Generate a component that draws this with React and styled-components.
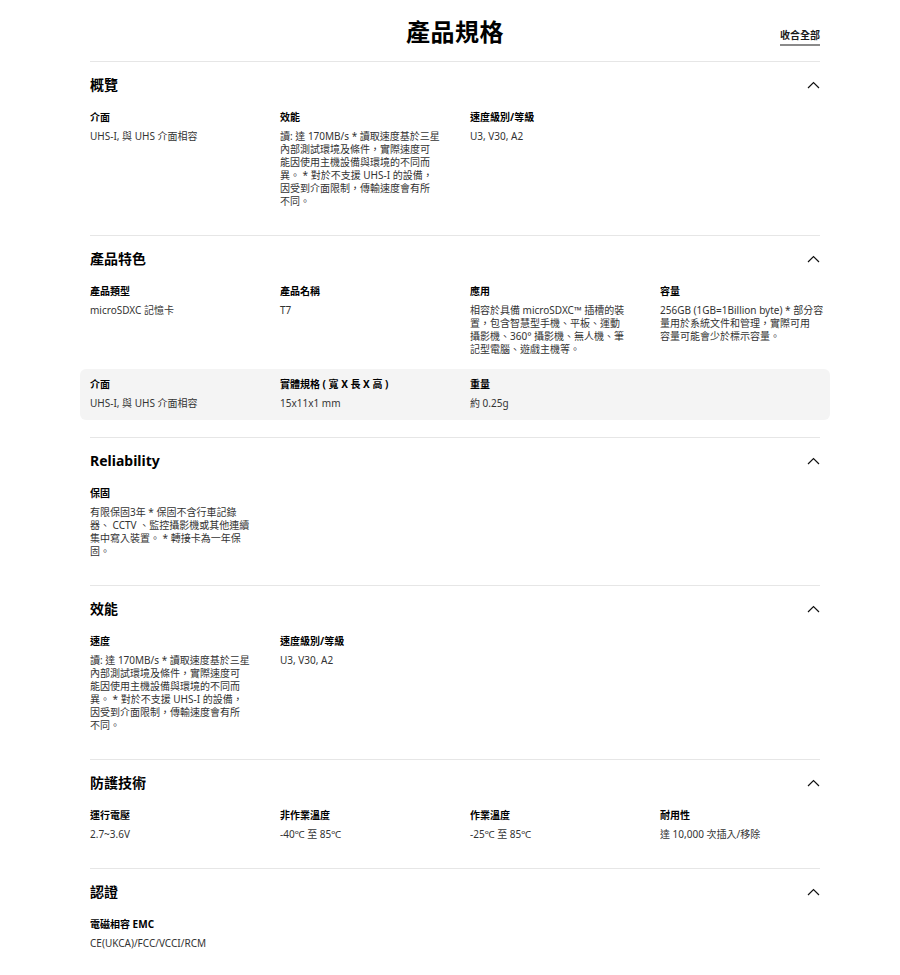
import React from "react";
import styled, { createGlobalStyle } from "styled-components";

const Global = createGlobalStyle`
  html, body { margin: 0; padding: 0; background: #fff; }
  body {
    font-family: "Noto Sans", "Noto Sans CJK TC", sans-serif;
    color: #000;
  }
`;

const Page = styled.div`
  padding: 0 80px 0 90px;
`;

const Header = styled.header`
  display: grid;
  grid-template-columns: 1fr auto 1fr;
  align-items: end;
  padding: 16px 0 15px;
`;

const Title = styled.h1`
  grid-column: 2;
  margin: 0;
  font-family: "Noto Sans CJK TC", sans-serif;
  font-size: 24px;
  line-height: 30px;
  font-weight: 700;
  letter-spacing: 0.5px;
`;

const CollapseAll = styled.a`
  justify-self: end;
  font-family: "Noto Sans CJK TC", sans-serif;
  font-size: 10px;
  line-height: 13px;
  font-weight: 700;
  color: #1a1a1a;
  border-bottom: 2px solid #8a8a8a;
  padding-bottom: 3px;
  cursor: pointer;
`;

const Section = styled.section`
  border-top: 1px solid #e6e6e6;
  padding: 13px 0 17px;
`;

const SectionHead = styled.div`
  display: flex;
  align-items: center;
  justify-content: space-between;
  height: 20px;
`;

const SectionTitle = styled.h2`
  margin: 0;
  font-family: "Noto Sans", "Noto Sans CJK TC", sans-serif;
  font-size: 14px;
  line-height: 20px;
  font-weight: 700;
`;

const Rows = styled.div`
  display: flex;
  flex-direction: column;
  gap: 3px;
  margin-top: 7px;
`;

const Row = styled.div`
  display: grid;
  grid-template-columns: repeat(4, 160px);
  column-gap: 30px;
  padding: 9px 10px 10px;
  margin: 0 -10px;
  border-radius: 6px;
  background: ${(p) => (p.$shaded ? "#f4f4f4" : "transparent")};
`;

const Item = styled.div`
  display: flex;
  flex-direction: column;
  gap: 6px;
`;

const Label = styled.div`
  font-size: 10px;
  line-height: 13px;
  font-weight: 700;
  color: #000;
  white-space: nowrap;
`;

const Value = styled.div`
  font-size: 10px;
  line-height: 13px;
  color: #333;
  white-space: nowrap;
`;

const Chevron = () => (
  <svg width="13" height="8" viewBox="0 0 13 8" fill="none">
    <polyline points="1,7 6.5,1.5 12,7" stroke="#111" strokeWidth="1.2" fill="none" />
  </svg>
);

const Lines = ({ lines }) =>
  lines.map((l, i) => (
    <React.Fragment key={i}>
      {l}
      {i < lines.length - 1 && <br />}
    </React.Fragment>
  ));

const speedText = [
  "讀: 達 170MB/s * 讀取速度基於三星",
  "內部測試環境及條件，實際速度可",
  "能因使用主機設備與環境的不同而",
  "異。 * 對於不支援 UHS-I 的設備，",
  "因受到介面限制，傳輸速度會有所",
  "不同。",
];

const sections = [
  {
    title: "概覽",
    rows: [
      [
        { label: "介面", value: ["UHS-I, 與 UHS 介面相容"] },
        { label: "效能", value: speedText },
        { label: "速度級別/等級", value: ["U3, V30, A2"] },
      ],
    ],
  },
  {
    title: "產品特色",
    rows: [
      [
        { label: "產品類型", value: ["microSDXC 記憶卡"] },
        { label: "產品名稱", value: ["T7"] },
        {
          label: "應用",
          value: [
            "相容於具備 microSDXC™ 插槽的裝",
            "置，包含智慧型手機、平板、運動",
            "攝影機、360° 攝影機、無人機、筆",
            "記型電腦、遊戲主機等。",
          ],
        },
        {
          label: "容量",
          value: [
            "256GB (1GB=1Billion byte) * 部分容",
            "量用於系統文件和管理，實際可用",
            "容量可能會少於標示容量。",
          ],
        },
      ],
      [
        { label: "介面", value: ["UHS-I, 與 UHS 介面相容"] },
        { label: "實體規格 ( 寬 X 長 X 高 )", value: ["15x11x1 mm"] },
        { label: "重量", value: ["約 0.25g"] },
      ],
    ],
  },
  {
    title: "Reliability",
    rows: [
      [
        {
          label: "保固",
          value: [
            "有限保固3年 * 保固不含行車記錄",
            "器、 CCTV 、監控攝影機或其他連續",
            "集中寫入裝置。 * 轉接卡為一年保",
            "固。",
          ],
        },
      ],
    ],
  },
  {
    title: "效能",
    rows: [
      [
        { label: "速度", value: speedText },
        { label: "速度級別/等級", value: ["U3, V30, A2"] },
      ],
    ],
  },
  {
    title: "防護技術",
    rows: [
      [
        { label: "運行電壓", value: ["2.7~3.6V"] },
        { label: "非作業溫度", value: ["-40℃ 至 85℃"] },
        { label: "作業溫度", value: ["-25℃ 至 85℃"] },
        { label: "耐用性", value: ["達 10,000 次插入/移除"] },
      ],
    ],
  },
  {
    title: "認證",
    rows: [[{ label: "電磁相容 EMC", value: ["CE(UKCA)/FCC/VCCI/RCM"] }]],
  },
];

export default function App() {
  return (
    <>
      <Global />
      <Page>
        <Header>
          <Title>產品規格</Title>
          <CollapseAll>收合全部</CollapseAll>
        </Header>
        {sections.map((s) => (
          <Section key={s.title}>
            <SectionHead>
              <SectionTitle>{s.title}</SectionTitle>
              <Chevron />
            </SectionHead>
            <Rows>
              {s.rows.map((row, ri) => (
                <Row key={ri} $shaded={ri % 2 === 1}>
                  {row.map((it) => (
                    <Item key={it.label}>
                      <Label>{it.label}</Label>
                      <Value>
                        <Lines lines={it.value} />
                      </Value>
                    </Item>
                  ))}
                </Row>
              ))}
            </Rows>
          </Section>
        ))}
      </Page>
    </>
  );
}
